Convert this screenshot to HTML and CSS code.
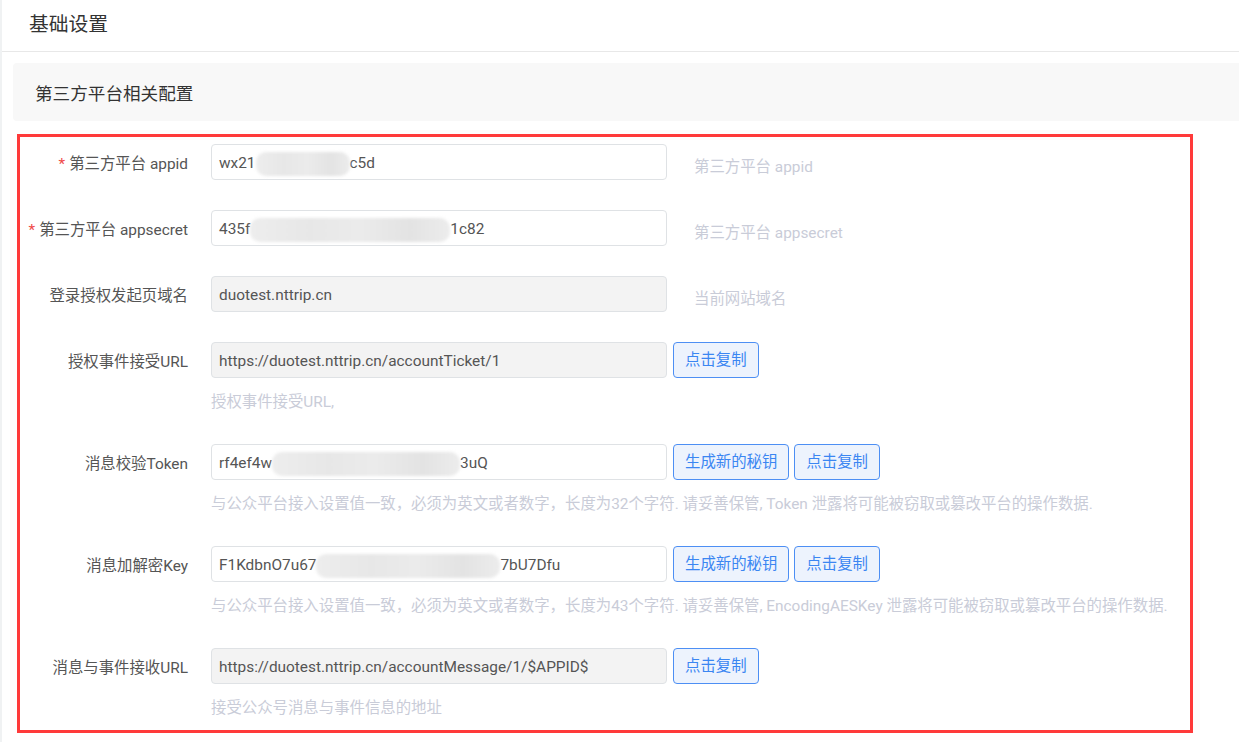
FILE: index.html
```html
<!DOCTYPE html>
<html lang="zh-CN">
<head>
<meta charset="utf-8">
<title>基础设置</title>
<link rel="stylesheet" href="styles.css">
</head>
<body>
<div class="panel">
  <div class="panel-header">基础设置</div>
  <div class="panel-body">
    <div class="section-bar">第三方平台相关配置</div>
    <div class="form">
      <div class="form-item">
        <div class="form-label"><span class="req">*</span>第三方平台 appid</div>
        <div class="form-content">
          <div class="line">
            <div class="input">wx21<span class="mask mask-1"></span>c5d</div>
            <span class="side-tip">第三方平台 appid</span>
          </div>
        </div>
      </div>
      <div class="form-item">
        <div class="form-label"><span class="req">*</span>第三方平台 appsecret</div>
        <div class="form-content">
          <div class="line">
            <div class="input">435f<span class="mask mask-2"></span>1c82</div>
            <span class="side-tip">第三方平台 appsecret</span>
          </div>
        </div>
      </div>
      <div class="form-item">
        <div class="form-label">登录授权发起页域名</div>
        <div class="form-content">
          <div class="line">
            <div class="input disabled">duotest.nttrip.cn</div>
            <span class="side-tip">当前网站域名</span>
          </div>
        </div>
      </div>
      <div class="form-item">
        <div class="form-label">授权事件接受URL</div>
        <div class="form-content">
          <div class="line">
            <div class="input disabled">https://duotest.nttrip.cn/accountTicket/1</div>
            <button class="btn" type="button">点击复制</button>
          </div>
          <div class="help">授权事件接受URL,</div>
        </div>
      </div>
      <div class="form-item">
        <div class="form-label">消息校验Token</div>
        <div class="form-content">
          <div class="line">
            <div class="input">rf4ef4w<span class="mask mask-3"></span>3uQ</div>
            <button class="btn" type="button">生成新的秘钥</button>
            <button class="btn" type="button">点击复制</button>
          </div>
          <div class="help">与公众平台接入设置值一致，必须为英文或者数字，长度为32个字符. 请妥善保管, Token 泄露将可能被窃取或篡改平台的操作数据.</div>
        </div>
      </div>
      <div class="form-item">
        <div class="form-label">消息加解密Key</div>
        <div class="form-content">
          <div class="line">
            <div class="input">F1KdbnO7u67<span class="mask mask-4"></span>7bU7Dfu</div>
            <button class="btn" type="button">生成新的秘钥</button>
            <button class="btn" type="button">点击复制</button>
          </div>
          <div class="help">与公众平台接入设置值一致，必须为英文或者数字，长度为43个字符. 请妥善保管, EncodingAESKey 泄露将可能被窃取或篡改平台的操作数据.</div>
        </div>
      </div>
      <div class="form-item">
        <div class="form-label">消息与事件接收URL</div>
        <div class="form-content">
          <div class="line">
            <div class="input disabled">https://duotest.nttrip.cn/accountMessage/1/$APPID$</div>
            <button class="btn" type="button">点击复制</button>
          </div>
          <div class="help">接受公众号消息与事件信息的地址</div>
        </div>
      </div>
    </div>
  </div>
</div>
</body>
</html>
```
FILE: styles.css
```css
* { box-sizing: border-box; }
html, body { margin: 0; padding: 0; }
body {
  background: #f0f2f3;
  font-family: Roboto, "Noto Sans CJK SC", sans-serif;
  color: #333;
  height: 742px;
  overflow: hidden;
}
.panel {
  margin-left: 2px;
  background: #fff;
  min-height: 742px;
}
.panel-header {
  height: 52px;
  padding: 0 0 0 27px;
  line-height: 49px;
  font-size: 19.8px;
  color: #333;
  border-bottom: 1px solid #e8e8e8;
}
.panel-body {
  padding: 11px 0 0 11px;
}
.section-bar {
  height: 58px;
  padding: 5px 0 0 22px;
  line-height: 53px;
  font-size: 17.6px;
  color: #333;
  background: #f8f8f8;
  border-radius: 4px 0 0 4px;
}
.form {
  margin: 13px 0 0 4px;
  width: 1176px;
  border: 3px solid #ff3a3a;
  padding: 7px 0 10px;
}
.form-item {
  display: flex;
  align-items: flex-start;
  margin-bottom: 30px;
}
.form-item:last-child { margin-bottom: 0; }
.form-label {
  width: 191px;
  height: 36px;
  padding: 5px 23px 0 0;
  text-align: right;
  line-height: 31px;
  font-size: 15.4px;
  color: #555;
  white-space: nowrap;
}
.req {
  color: #f04848;
  margin-right: 4px;
}
.form-content { flex: 1; }
.line {
  display: flex;
  align-items: center;
  height: 36px;
}
.input {
  width: 456px;
  height: 36px;
  border: 1px solid #dfe2e5;
  border-radius: 4px;
  padding: 3px 7px 0;
  line-height: 31px;
  font-size: 15.4px;
  color: #555;
  white-space: nowrap;
  overflow: hidden;
  display: flex;
  align-items: center;
}
.input.disabled {
  background: #f3f3f3;
}
.mask {
  display: inline-block;
  height: 24px;
  background: linear-gradient(90deg, #ededed 0%, #e7e7e7 30%, #ebebeb 55%, #e3e3e3 80%, #ececec 100%);
  filter: blur(1.5px);
  border-radius: 10px;
}
.mask-1 { width: 94px; }
.mask-2 { width: 200px; }
.mask-3 { width: 188px; }
.mask-4 { width: 184px; }
.side-tip {
  margin-left: 27px;
  padding-top: 9px;
  font-size: 15.4px;
  line-height: 24px;
  color: #c9ccd8;
  white-space: nowrap;
}
.btn {
  height: 36px;
  margin-left: 6px;
  padding: 0 11px;
  border: 1px solid #4d8ff4;
  border-radius: 4px;
  background: #edf3fd;
  color: #3b86f2;
  font-family: Roboto, "Noto Sans CJK SC", sans-serif;
  font-size: 15.4px;
  line-height: 34px;
  cursor: pointer;
}
.btn + .btn { margin-left: 5px; }
.help {
  margin-top: 12px;
  line-height: 24px;
  font-size: 15.4px;
  color: #c9ccd8;
  white-space: nowrap;
}
```
